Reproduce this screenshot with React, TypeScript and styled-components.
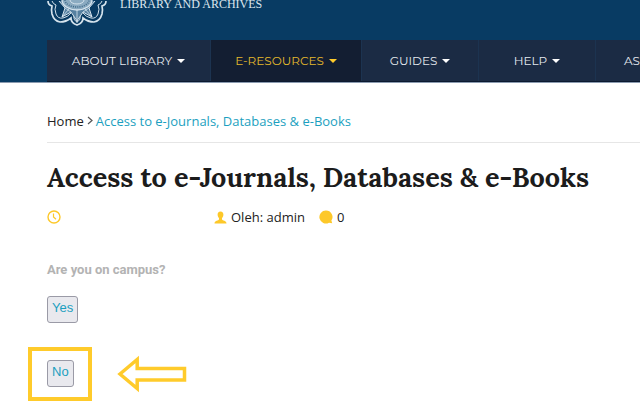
import React from "react";
import styled, { createGlobalStyle } from "styled-components";

const GlobalStyle = createGlobalStyle`
  * { box-sizing: border-box; }
  body {
    margin: 0;
    background: #fff;
    color: #222;
    font-family: "Open Sans", "Noto Sans", sans-serif;
    font-size: 13px;
  }
`;

const Header = styled.header`
  padding-left: 47px;
  background: #083b63;
  border-bottom: 1px solid #8b9bb0;
`;

const Brand = styled.div`
  display: flex;
  align-items: flex-start;
  gap: 13px;
  height: 40px;
`;

const BrandName = styled.span`
  color: #dce6ee;
  font: 12px/8px "Liberation Serif", serif;
  white-space: nowrap;
`;

const Nav = styled.nav`
  display: flex;
  overflow: hidden;
  background: #1b2b44;
  border-bottom: 1px solid #0b1930;
`;

const NavItem = styled.button<{ $width: number; $active?: boolean }>`
  display: flex;
  flex: 0 0 ${(p) => p.$width}px;
  align-items: center;
  justify-content: center;
  gap: 5px;
  height: 41px;
  padding: 0;
  border: 0;
  border-right: 1px solid #1c3350;
  background: ${(p) => (p.$active ? "#131e32" : "transparent")};
  color: ${(p) => (p.$active ? "#e3b82c" : "#e4e8ee")};
  font: 12px/20px Montserrat, Inter, sans-serif;
  white-space: nowrap;

  &:last-child {
    flex: 1 0 auto;
    justify-content: flex-start;
    padding-left: 28px;
    border-right: 0;
  }
`;

const Caret = styled.span`
  border: 4px solid transparent;
  border-top-color: ${(p) => p.color ?? "#fff"};
  border-bottom: 0;
`;

const Main = styled.main`
  padding-left: 47px;
`;

const Breadcrumb = styled.nav`
  display: flex;
  align-items: center;
  gap: 3px;
  height: 60px;
  padding-top: 16px;
  border-bottom: 1px solid #e6e6e6;
  line-height: 20px;
`;

const Crumb = styled.a<{ $current?: boolean }>`
  color: ${(p) => (p.$current ? "#1c9fc0" : "#222")};
  text-decoration: none;
  white-space: nowrap;
`;

const Title = styled.h1`
  margin: 16px 0 12px;
  color: #1c1c1c;
  font: bold 27px/36px Lora, "Liberation Serif", serif;
  white-space: nowrap;
`;

const Meta = styled.div`
  display: flex;
  align-items: center;
  gap: 14px;
  height: 20px;
  line-height: 20px;
`;

const MetaItem = styled.span<{ $width?: number }>`
  display: flex;
  flex: 0 0 ${(p) => (p.$width ? `${p.$width}px` : "auto")};
  align-items: center;
  gap: 4px;
`;

const Question = styled.p`
  margin: 33px 0 16px;
  color: #b3b3b3;
  font: bold 13px/20px Roboto, sans-serif;
`;

const Answer = styled.button`
  display: block;
  height: 27px;
  padding: 0 4px 4px;
  border: 1px solid #9a9aa6;
  border-radius: 3px;
  background: #e9e9ee;
  color: #1c9fc0;
  font: 13px/20px "Liberation Sans", sans-serif;
`;

const Callout = styled.div`
  display: flex;
  align-items: center;
  gap: 24px;
  margin: 24px 0 0 -19px;
`;

const Frame = styled.div`
  padding: 9px 14px 10px 15px;
  border: 4px solid #ffcb2b;
`;

const menu = [
  { label: "ABOUT LIBRARY", width: 164, caret: true },
  { label: "E-RESOURCES", width: 151, caret: true, active: true },
  { label: "GUIDES", width: 117, caret: true },
  { label: "HELP", width: 117, caret: true },
  { label: "AS", width: 44 },
];

function Crest() {
  return (
    <svg width="60" height="27" viewBox="0 0 60 27" fill="none" stroke="#d5e3ed" aria-hidden="true">
      <path d="M1 1Q1 5 5 6Q4 10 5 14Q7 21 13 22Q19 22 24 18Q24 23 30 25Q36 23 36 18Q41 22 47 22Q53 21 55 14Q56 10 55 6Q59 5 59 1" strokeWidth="1.7" />
      <path d="M5 1Q6 4 9 5Q7 9 9 14Q11 19 16 18Q21 17 24 13M55 1Q54 4 51 5Q53 9 51 14Q49 19 44 18Q39 17 36 13M27 15Q26 20 30 22Q34 20 33 15" strokeWidth="1" />
      <path d="M12 1L18 8L15 17L24 12L30 21L36 12L45 17L42 8L48 1" fill="#5580a0" strokeWidth="1" />
      <path d="M18 8L24 12M42 8L36 12M30 10V23M15 17L22 9M45 17L38 9" strokeWidth="0.8" />
      <path d="M15 0A15 10 0 0 0 45 0" fill="#8babc1" strokeWidth="1.3" />
      <path d="M18 0A12 7 0 0 0 42 0" stroke="#416b8b" strokeDasharray="1 1.2" strokeWidth="1.6" />
      <path d="M23 0A7 4 0 0 0 37 0" strokeWidth="1" />
    </svg>
  );
}

export default function App() {
  return (
    <>
      <GlobalStyle />
      <Header>
        <Brand>
          <Crest />
          <BrandName>LIBRARY AND ARCHIVES</BrandName>
        </Brand>
        <Nav aria-label="Main">
          {menu.map((m) => (
            <NavItem key={m.label} $width={m.width} $active={m.active}>
              {m.label}
              {m.caret && <Caret color={m.active ? "#ffcb2b" : "#fff"} />}
            </NavItem>
          ))}
        </Nav>
      </Header>
      <Main>
        <Breadcrumb aria-label="Breadcrumb">
          <Crumb href="#">Home</Crumb>
          <svg width="6" height="9" viewBox="0 0 6 9" fill="none" stroke="#555" strokeWidth="1.2" aria-hidden="true">
            <path d="M1 1L5 4.5L1 8" />
          </svg>
          <Crumb href="#" $current>Access to e-Journals, Databases &amp; e-Books</Crumb>
        </Breadcrumb>
        <Title>Access to e-Journals, Databases &amp; e-Books</Title>
        <Meta>
          <MetaItem $width={153}>
            <svg width="14" height="14" viewBox="0 0 14 14" fill="none" stroke="#fdc829" aria-hidden="true">
              <circle cx="7" cy="7" r="6" strokeWidth="1.4" />
              <path d="M6.5 3.5V7L9 9.2" strokeWidth="1.2" />
            </svg>
          </MetaItem>
          <MetaItem>
            <svg width="13" height="13" viewBox="0 0 13 13" fill="#fdc829" aria-hidden="true">
              <path d="M6.5 0.5C8.5 0.5 9.5 1.8 9.4 3.8C9.3 5.5 8.6 6.5 8 7.3V8.4C8.4 9.5 12.5 9.3 12.5 12.5H0.5C0.5 9.3 4.6 9.5 5 8.4V7.3C4.4 6.5 3.7 5.5 3.6 3.8C3.5 1.8 4.5 0.5 6.5 0.5Z" />
            </svg>
            Oleh: admin
          </MetaItem>
          <MetaItem>
            <svg width="14" height="14" viewBox="0 0 14 14" fill="#fdc829" aria-hidden="true">
              <path d="M7 0.5A6.5 6.5 0 0 1 12.4 10.6L13.2 13.2L10 12.7A6.5 6.5 0 1 1 7 0.5Z" />
            </svg>
            0
          </MetaItem>
        </Meta>
        <Question>Are you on campus?</Question>
        <Answer>Yes</Answer>
        <Callout>
          <Frame>
            <Answer>No</Answer>
          </Frame>
          <svg width="72" height="40" viewBox="0 0 72 40" fill="none" stroke="#ffcb2b" strokeWidth="3.5" aria-hidden="true">
            <path d="M4 20L21.2 5.5V14.5H68.5V26H21.2V34.5Z" />
          </svg>
        </Callout>
      </Main>
    </>
  );
}
